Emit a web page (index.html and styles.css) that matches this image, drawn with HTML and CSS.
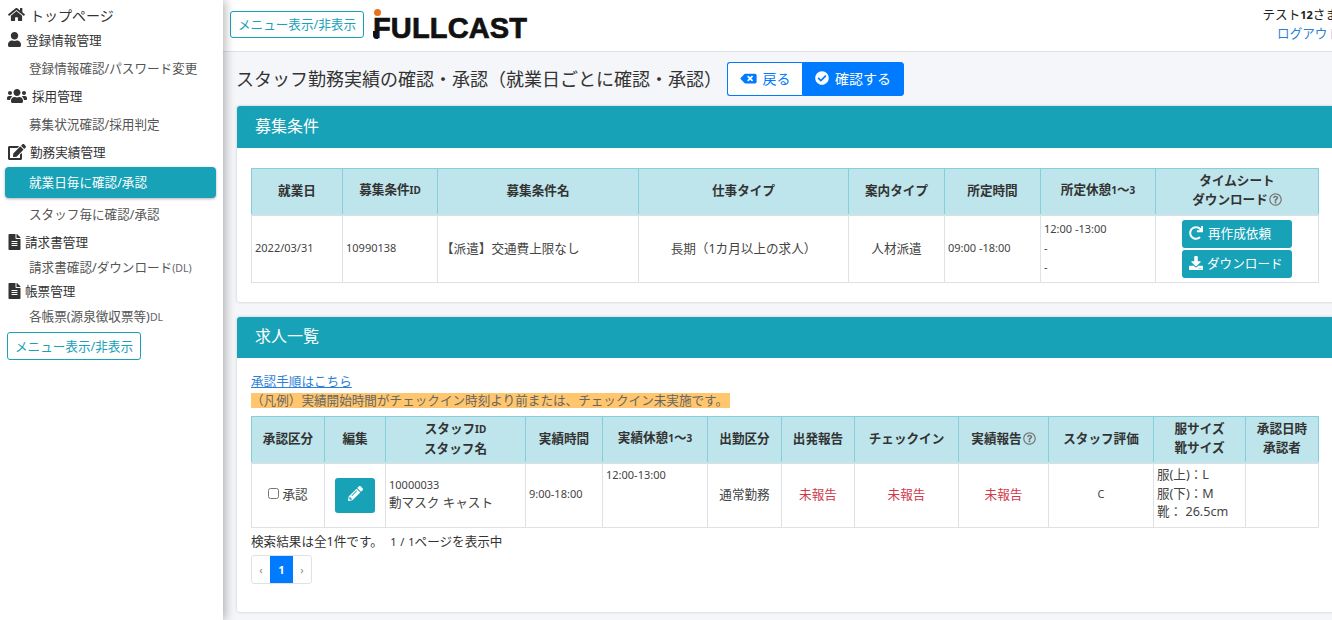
FILE: index.html
```html
<!DOCTYPE html>
<html lang="ja">
<head>
    <meta charset="UTF-8">
    <meta name="viewport" content="width=device-width, initial-scale=1.0">
    <title>スタッフ勤務実績の確認・承認</title>
    <link rel="stylesheet" href="styles.css">
</head>
<body>
    <svg class="icon-defs" xmlns="http://www.w3.org/2000/svg">
        <symbol id="i-home" viewBox="0 0 576 512"><path d="M280.37 148.26L96 300.11V464a16 16 0 0 0 16 16l112.06-.29a16 16 0 0 0 15.92-16V368a16 16 0 0 1 16-16h64a16 16 0 0 1 16 16v95.64a16 16 0 0 0 16 16.05L464 480a16 16 0 0 0 16-16V300L295.67 148.26a12.19 12.19 0 0 0-15.3 0zM571.6 251.47L488 182.56V44.05a12 12 0 0 0-12-12h-56a12 12 0 0 0-12 12v72.61L318.47 43a48 48 0 0 0-61 0L4.34 251.47a12 12 0 0 0-1.6 16.9l25.5 31A12 12 0 0 0 45.15 301l235.22-193.74a12.19 12.19 0 0 1 15.3 0L530.9 301a12 12 0 0 0 16.9-1.6l25.5-31a12 12 0 0 0-1.7-16.93z"/></symbol>
        <symbol id="i-user" viewBox="0 0 448 512"><path d="M224 256c70.7 0 128-57.3 128-128S294.7 0 224 0 96 57.3 96 128s57.3 128 128 128zm89.6 32h-16.7c-22.2 10.2-46.9 16-72.9 16s-50.6-5.8-72.9-16h-16.7C60.2 288 0 348.2 0 422.4V464c0 26.5 21.5 48 48 48h352c26.5 0 48-21.5 48-48v-41.6c0-74.2-60.2-134.4-134.4-134.4z"/></symbol>
        <symbol id="i-users" viewBox="0 0 640 512"><path d="M96 224c35.3 0 64-28.7 64-64s-28.7-64-64-64-64 28.7-64 64 28.7 64 64 64zm448 0c35.3 0 64-28.7 64-64s-28.7-64-64-64-64 28.7-64 64 28.7 64 64 64zm32 32h-64c-17.6 0-33.5 7.1-45.1 18.6 40.3 22.1 68.9 62 75.1 109.4h66c17.7 0 32-14.3 32-32v-32c0-35.3-28.7-64-64-64zm-256 0c61.9 0 112-50.1 112-112S381.9 32 320 32 208 82.1 208 144s50.1 112 112 112zm76.8 32h-8.3c-20.8 10-43.9 16-68.5 16s-47.6-6-68.5-16h-8.3C179.6 288 128 339.6 128 403.2V432c0 26.5 21.5 48 48 48h288c26.5 0 48-21.5 48-48v-28.8c0-63.6-51.6-115.2-115.2-115.2zm-223.7-13.4C161.5 263.1 145.6 256 128 256H64c-35.3 0-64 28.7-64 64v32c0 17.7 14.3 32 32 32h65.9c6.3-47.4 34.9-87.3 75.2-109.4z"/></symbol>
        <symbol id="i-edit" viewBox="0 0 576 512"><path d="M402.6 83.2l90.2 90.2c3.8 3.8 3.8 10 0 13.8L274.4 405.6l-92.8 10.3c-12.4 1.4-22.9-9.1-21.5-21.5l10.3-92.8L388.8 83.2c3.8-3.8 10-3.8 13.8 0zm162-22.9l-48.8-48.8c-15.2-15.2-39.9-15.2-55.2 0l-35.4 35.4c-3.8 3.8-3.8 10 0 13.8l90.2 90.2c3.8 3.8 10 3.8 13.8 0l35.4-35.4c15.2-15.3 15.2-40 0-55.2zM384 346.2V448H64V128h229.8c3.2 0 6.2-1.3 8.5-3.5l40-40c7.6-7.6 2.2-20.5-8.5-20.5H48C21.5 64 0 85.5 0 112v352c0 26.5 21.5 48 48 48h352c26.5 0 48-21.5 48-48V306.2c0-10.7-12.9-16-20.5-8.5l-40 40c-2.2 2.3-3.5 5.3-3.5 8.5z"/></symbol>
        <symbol id="i-file" viewBox="0 0 384 512"><path d="M224 136V0H24C10.7 0 0 10.7 0 24v464c0 13.3 10.7 24 24 24h336c13.3 0 24-10.7 24-24V160H248c-13.2 0-24-10.8-24-24zm64 236c0 6.6-5.4 12-12 12H108c-6.6 0-12-5.4-12-12v-8c0-6.6 5.4-12 12-12h168c6.6 0 12 5.4 12 12v8zm0-64c0 6.6-5.4 12-12 12H108c-6.6 0-12-5.4-12-12v-8c0-6.6 5.4-12 12-12h168c6.6 0 12 5.4 12 12v8zm0-72v8c0 6.6-5.4 12-12 12H108c-6.6 0-12-5.4-12-12v-8c0-6.6 5.4-12 12-12h168c6.6 0 12 5.4 12 12zm96-114.1v6.1H256V0h6.1c6.4 0 12.5 2.5 17 7l97.9 98c4.5 4.5 7 10.6 7 16.9z"/></symbol>
        <symbol id="i-back" viewBox="0 0 640 512"><path d="M576 64H205.26A63.97 63.97 0 0 0 160 82.75L9.37 233.37c-12.5 12.5-12.5 32.76 0 45.25L160 429.25c12 12 28.28 18.75 45.25 18.75H576c35.35 0 64-28.65 64-64V128c0-35.35-28.65-64-64-64zm-84.69 254.06c6.25 6.25 6.25 16.38 0 22.63l-22.62 22.62c-6.25 6.25-16.38 6.25-22.63 0L384 301.25l-62.06 62.06c-6.25 6.25-16.38 6.25-22.63 0l-22.62-22.62c-6.25-6.25-6.25-16.38 0-22.63L338.75 256l-62.06-62.06c-6.25-6.25-6.25-16.38 0-22.63l22.62-22.62c6.25-6.25 16.38-6.25 22.63 0L384 210.75l62.06-62.06c6.25-6.25 16.38-6.25 22.63 0l22.62 22.62c6.25 6.25 6.25 16.38 0 22.63L429.25 256l62.06 62.06z"/></symbol>
        <symbol id="i-check" viewBox="0 0 512 512"><path d="M504 256c0 136.967-111.033 248-248 248S8 392.967 8 256 119.033 8 256 8s248 111.033 248 248zM227.314 387.314l184-184c6.248-6.248 6.248-16.379 0-22.627l-22.627-22.627c-6.248-6.249-16.379-6.249-22.628 0L216 308.118l-70.059-70.059c-6.248-6.248-16.379-6.248-22.628 0l-22.627 22.627c-6.248 6.248-6.248 16.379 0 22.627l104 104c6.249 6.249 16.379 6.249 22.628.001z"/></symbol>
        <symbol id="i-redo" viewBox="0 0 512 512"><path d="M500.33 0h-47.41a12 12 0 0 0-12 12.57l4 82.76A247.42 247.42 0 0 0 256 8C119.34 8 7.9 119.53 8 256.19 8.1 393.07 119.1 504 256 504a247.1 247.1 0 0 0 166.18-63.91 12 12 0 0 0 .48-17.43l-34-34a12 12 0 0 0-16.38-.55A176 176 0 1 1 402.1 157.8l-101.53-4.87a12 12 0 0 0-12.57 12v47.41a12 12 0 0 0 12 12h200.33a12 12 0 0 0 12-12V12a12 12 0 0 0-12-12z"/></symbol>
        <symbol id="i-download" viewBox="0 0 512 512"><path d="M216 0h80c13.3 0 24 10.7 24 24v168h87.7c17.8 0 26.7 21.5 14.1 34.1L269.7 378.3c-7.5 7.5-19.8 7.5-27.3 0L90.1 226.1c-12.6-12.6-3.7-34.1 14.1-34.1H192V24c0-13.3 10.7-24 24-24zm296 376v112c0 13.3-10.7 24-24 24H24c-13.3 0-24-10.7-24-24V376c0-13.3 10.7-24 24-24h146.7l49 49c20.1 20.1 52.5 20.1 72.6 0l49-49H488c13.3 0 24 10.7 24 24zm-124 88c0-11-9-20-20-20s-20 9-20 20 9 20 20 20 20-9 20-20zm64 0c0-11-9-20-20-20s-20 9-20 20 9 20 20 20 20-9 20-20z"/></symbol>
        <symbol id="i-pencil" viewBox="0 0 512 512"><path d="M497.9 142.1l-46.1 46.1c-4.7 4.7-12.3 4.7-17 0l-111-111c-4.7-4.7-4.7-12.3 0-17l46.1-46.1c18.7-18.7 49.1-18.7 67.9 0l60.1 60.1c18.8 18.7 18.8 49.1 0 67.9zM284.2 99.8L21.6 362.4.4 483.9c-2.9 16.4 11.4 30.6 27.8 27.8l121.5-21.3 262.6-262.6c4.7-4.7 4.7-12.3 0-17l-111-111c-4.8-4.7-12.4-4.7-17.1 0zM124.1 339.9c-5.5-5.5-5.5-14.3 0-19.8l154-154c5.5-5.5 14.3-5.5 19.8 0s5.5 14.3 0 19.8l-154 154c-5.5 5.5-14.3 5.5-19.8 0zM88 424h48v36.3l-64.5 11.3-31.1-31.1L51.7 376H88v48z"/></symbol>
        <symbol id="i-help" viewBox="0 0 512 512"><path d="M256 8C119.043 8 8 119.083 8 256c0 136.997 111.043 248 248 248s248-111.003 248-248C504 119.083 392.957 8 256 8zm0 448c-110.532 0-200-89.431-200-200 0-110.495 89.472-200 200-200 110.491 0 200 89.471 200 200 0 110.53-89.431 200-200 200zm107.244-255.2c0 67.052-72.421 68.084-72.421 92.863V300c0 6.627-5.373 12-12 12h-45.647c-6.627 0-12-5.373-12-12v-8.659c0-35.745 27.1-50.034 47.579-61.516 17.561-9.845 28.324-16.541 28.324-29.579 0-17.246-21.999-28.693-39.784-28.693-23.189 0-33.894 10.977-48.942 29.969-4.057 5.12-11.46 6.071-16.666 2.124l-27.824-21.098c-5.107-3.872-6.251-11.066-2.644-16.363C184.846 131.491 214.94 112 261.794 112c49.071 0 101.45 38.304 101.45 88.8zM298 368c0 23.159-18.841 42-42 42s-42-18.841-42-42 18.841-42 42-42 42 18.841 42 42z"/></symbol>
    </svg>

    <aside class="sidebar">
        <a class="menu-head menu-top"><svg class="icon icon-home"><use href="#i-home"/></svg>トップページ</a>
        <div class="menu-head"><svg class="icon icon-user"><use href="#i-user"/></svg>登録情報管理</div>
        <a class="menu-link">登録情報確認/パスワード変更</a>
        <div class="menu-head"><svg class="icon icon-users"><use href="#i-users"/></svg>採用管理</div>
        <a class="menu-link">募集状況確認/採用判定</a>
        <div class="menu-head"><svg class="icon icon-edit"><use href="#i-edit"/></svg>勤務実績管理</div>
        <a class="menu-link menu-active">就業日毎に確認/承認</a>
        <a class="menu-link">スタッフ毎に確認/承認</a>
        <div class="menu-head"><svg class="icon icon-file"><use href="#i-file"/></svg>請求書管理</div>
        <a class="menu-link menu-short"><span>請求書確認/ダウンロード<small>(DL)</small></span></a>
        <div class="menu-head"><svg class="icon icon-file"><use href="#i-file"/></svg>帳票管理</div>
        <a class="menu-link menu-short"><span>各帳票(源泉徴収票等)<small>DL</small></span></a>
        <button class="toggle-btn toggle-side">メニュー表示/非表示</button>
    </aside>

    <div class="main">
        <header class="topbar">
            <button class="toggle-btn">メニュー表示/非表示</button>
            <div class="logo">
                <span class="logo-dot"></span>
                <span class="logo-tail"></span>
                <span class="logo-text">FULLCAST</span>
            </div>
            <div class="user-box">
                <div class="user-name">テスト<b>12</b>さま</div>
                <a class="logout">ログアウト</a>
            </div>
        </header>

        <div class="content">
            <div class="page-title">
                <h1>スタッフ勤務実績の確認・承認（就業日ごとに確認・承認）</h1>
                <div class="btn-group">
                    <button class="btn-back"><svg class="icon icon-back"><use href="#i-back"/></svg>戻る</button>
                    <button class="btn-confirm"><svg class="icon icon-check"><use href="#i-check"/></svg>確認する</button>
                </div>
            </div>

            <section class="card card-cond">
                <div class="card-header">募集条件</div>
                <div class="card-body">
                    <table class="data-table cond-table">
                        <thead>
                            <tr>
                                <th>就業日</th>
                                <th>募集条件<small>ID</small></th>
                                <th>募集条件名</th>
                                <th>仕事タイプ</th>
                                <th>案内タイプ</th>
                                <th>所定時間</th>
                                <th>所定休憩<small>1</small>～<small>3</small></th>
                                <th>タイムシート<br>ダウンロード<svg class="icon icon-help"><use href="#i-help"/></svg></th>
                            </tr>
                        </thead>
                        <tbody>
                            <tr>
                                <td class="small">2022/03/31</td>
                                <td class="small">10990138</td>
                                <td>【派遣】交通費上限なし</td>
                                <td class="center">長期（1カ月以上の求人）</td>
                                <td class="center">人材派遣</td>
                                <td class="small">09:00 -18:00</td>
                                <td class="small rest-cell">12:00 -13:00<br>-<br>-</td>
                                <td class="center btn-cell">
                                    <button class="btn-teal"><svg class="icon icon-redo"><use href="#i-redo"/></svg>再作成依頼</button>
                                    <button class="btn-teal"><svg class="icon icon-download"><use href="#i-download"/></svg>ダウンロード</button>
                                </td>
                            </tr>
                        </tbody>
                    </table>
                </div>
            </section>

            <section class="card card-list">
                <div class="card-header">求人一覧</div>
                <div class="card-body">
                    <a class="guide-link">承認手順はこちら</a>
                    <div class="legend"><span>（凡例）実績開始時間がチェックイン時刻より前または、チェックイン未実施です。</span></div>
                    <table class="data-table list-table">
                        <thead>
                            <tr>
                                <th>承認区分</th>
                                <th>編集</th>
                                <th>スタッフ<small>ID</small><br>スタッフ名</th>
                                <th>実績時間</th>
                                <th>実績休憩<small>1</small>～<small>3</small></th>
                                <th>出勤区分</th>
                                <th>出発報告</th>
                                <th>チェックイン</th>
                                <th>実績報告<svg class="icon icon-help"><use href="#i-help"/></svg></th>
                                <th>スタッフ評価</th>
                                <th>服サイズ<br>靴サイズ</th>
                                <th>承認日時<br>承認者</th>
                            </tr>
                        </thead>
                        <tbody>
                            <tr>
                                <td class="center"><label class="approve"><input type="checkbox">承認</label></td>
                                <td class="center btn-cell"><button class="btn-edit"><svg class="icon icon-pencil"><use href="#i-pencil"/></svg></button></td>
                                <td><div class="small">10000033</div><div class="staff-name">動マスク キャスト</div></td>
                                <td class="small">9:00-18:00</td>
                                <td class="small top">12:00-13:00</td>
                                <td class="center">通常勤務</td>
                                <td class="center danger">未報告</td>
                                <td class="center danger">未報告</td>
                                <td class="center danger">未報告</td>
                                <td class="center small">C</td>
                                <td class="size-cell">服(上)：L<br>服(下)：M<br>靴： 26.5cm</td>
                                <td></td>
                            </tr>
                        </tbody>
                    </table>
                    <div class="result-text">検索結果は全1件です。 <span class="page-count">1 / 1</span>ページを表示中</div>
                    <ul class="pagination">
                        <li>‹</li>
                        <li class="current">1</li>
                        <li>›</li>
                    </ul>
                </div>
            </section>
        </div>
    </div>
</body>
</html>
```

FILE: styles.css
```css
:root {
    --teal: #17a2b8;
    --blue: #007bff;
    --text-color: #444;
    --head-bg: #bee5eb;
    --head-border: #86cfda;
    --cell-border: #dee2e6;
}

* {
    box-sizing: border-box;
}

html, body {
    height: 100%;
}

body {
    margin: 0;
    display: flex;
    overflow: hidden;
    background: #f4f6f9;
    color: var(--text-color);
    font-family: "Noto Sans", "Noto Sans CJK JP", sans-serif;
    font-size: 12.6px;
}

button {
    font-family: inherit;
    cursor: pointer;
}

.icon-defs {
    display: none;
}

.icon {
    fill: currentColor;
    flex-shrink: 0;
}

/* sidebar */
.sidebar {
    width: 223px;
    flex-shrink: 0;
    padding-top: 4px;
    background: white;
    box-shadow: 2px 0 10px rgba(0, 0, 0, 0.3);
    position: relative;
    z-index: 2;
}

.menu-head {
    display: flex;
    align-items: center;
    height: 24px;
    padding-left: 8px;
    padding-bottom: 1px;
    color: #333;
}

.menu-top {
    font-size: 14px;
    padding-bottom: 3px;
}

.menu-link {
    display: flex;
    align-items: center;
    height: 32px;
    padding-left: 29px;
    padding-bottom: 1px;
    color: #555;
}

.menu-link small {
    font-size: 10.5px;
    color: #666;
}

.menu-short {
    height: 25px;
}

.menu-active {
    height: 31px;
    width: 211px;
    margin: 3px 0 0 5px;
    padding-left: 24px;
    padding-bottom: 2px;
    border-radius: 4px;
    background: var(--teal);
    color: white;
    box-shadow: 0 1px 3px rgba(0, 0, 0, 0.3);
}

.icon-home { width: 17px; height: 15px; margin-right: 5px; }
.icon-user { width: 13px; height: 15px; margin-right: 5px; }
.icon-users { width: 20px; height: 16px; margin-right: 5px; margin-left: -1px; }
.icon-edit { width: 18px; height: 16px; margin-right: 4px; }
.icon-file { width: 13px; height: 16px; margin-right: 4px; }

.toggle-btn {
    height: 28px;
    padding: 0 0 1px;
    border: 1px solid var(--teal);
    border-radius: 3px;
    background: white;
    color: var(--teal);
    font-size: 12.6px;
    white-space: nowrap;
}

.toggle-side {
    margin: 4px 0 0 7px;
    width: 134px;
}

/* main */
.main {
    flex: 1;
    min-width: 0;
}

.topbar {
    display: flex;
    align-items: center;
    height: 52px;
    padding-left: 7px;
    padding-bottom: 3px;
    background: white;
    border-bottom: 1px solid #dee2e6;
}

.topbar .toggle-btn {
    width: 134px;
    height: 27px;
}

.logo {
    position: relative;
    margin-left: 9px;
    padding-top: 8px;
}

.logo-text {
    color: #111;
    font-family: "Liberation Sans", sans-serif;
    font-size: 29px;
    font-weight: 700;
    line-height: 28px;
    letter-spacing: 0.15px;
    -webkit-text-stroke: 0.7px #111;
}

.logo-dot {
    position: absolute;
    left: 1px;
    top: 3px;
    width: 7px;
    height: 7px;
    border-radius: 50%;
    background: #e8721c;
}

.logo-tail {
    position: absolute;
    left: 0;
    top: 25px;
    width: 5px;
    height: 8px;
    border-radius: 0 0 0 4px;
    background: #111;
}

.user-box {
    margin-left: auto;
    margin-right: -8px;
    text-align: right;
    white-space: nowrap;
    line-height: 19px;
    flex-shrink: 0;
}

.user-name {
    color: #222;
    margin-right: 2px;
}

.user-name b {
    font-size: 11px;
}

.logout {
    color: #2d7fd6;
}

.content {
    padding-left: 14px;
    margin-right: -30px;
}

.page-title {
    display: flex;
    align-items: center;
    height: 54px;
}

h1 {
    margin: 0 5px 3px -1px;
    color: #333;
    font-size: 18px;
    font-weight: 400;
    white-space: nowrap;
}

.btn-group {
    display: flex;
    height: 34px;
}

.btn-group button {
    display: flex;
    align-items: center;
    font-size: 14px;
    padding: 0 0 2px;
}

.btn-back {
    width: 75px;
    justify-content: center;
    border: 1px solid var(--blue);
    border-right: none;
    border-radius: 3px 0 0 3px;
    background: white;
    color: var(--blue);
}

.btn-confirm {
    width: 102px;
    justify-content: center;
    border: 1px solid var(--blue);
    border-radius: 0 3px 3px 0;
    background: var(--blue);
    color: white;
}

.icon-back { width: 17px; height: 13px; margin-right: 6px; }
.icon-check { width: 14px; height: 14px; margin-right: 6px; }

/* cards */
.card {
    background: white;
    border-radius: 3px;
    box-shadow: 0 0 3px rgba(0, 0, 0, 0.2);
}

.card-cond {
    height: 196px;
    margin-bottom: 15px;
}

.card-list {
    height: 295px;
}

.card-header {
    display: flex;
    align-items: center;
    height: 42px;
    padding-left: 18px;
    padding-bottom: 5px;
    background: var(--teal);
    color: white;
    font-size: 16px;
    border-radius: 3px 3px 0 0;
}

.card-list .card-header {
    height: 41px;
    padding-bottom: 6px;
}

.card-body {
    padding: 20px 14px 0;
}

.card-list .card-body {
    padding-top: 15px;
}

/* tables */
.data-table {
    border-collapse: collapse;
    table-layout: fixed;
    color: #444;
}

.data-table th {
    height: 46px;
    padding: 0 2px 2px;
    background: var(--head-bg);
    border: 1px solid var(--head-border);
    border-bottom: 2px solid #cfe3e8;
    color: #333;
    font-size: 12.6px;
    font-weight: 700;
    line-height: 19px;
    text-align: center;
}

.data-table th small {
    font-size: 10px;
}

.data-table td {
    padding: 3px 3px 5px;
    border: 1px solid var(--cell-border);
    vertical-align: middle;
}

.data-table td.btn-cell {
    padding: 3px;
}

.cond-table { width: 1067px; }
.cond-table tbody tr { height: 68px; }
.cond-table th:nth-child(1) { width: 91px; }
.cond-table th:nth-child(2) { width: 95px; }
.cond-table th:nth-child(3) { width: 201px; }
.cond-table th:nth-child(4) { width: 210px; }
.cond-table th:nth-child(5) { width: 96px; }
.cond-table th:nth-child(6) { width: 96px; }
.cond-table th:nth-child(7) { width: 115px; }
.cond-table th:nth-child(8) { width: 163px; }

.list-table { width: 1067px; }
.list-table tbody tr { height: 65px; }
.list-table th:nth-child(1) { width: 73px; }
.list-table th:nth-child(2) { width: 61px; }
.list-table th:nth-child(3) { width: 140px; }
.list-table th:nth-child(4) { width: 77px; }
.list-table th:nth-child(5) { width: 105px; }
.list-table th:nth-child(6) { width: 74px; }
.list-table th:nth-child(7) { width: 73px; }
.list-table th:nth-child(8) { width: 104px; }
.list-table th:nth-child(9) { width: 90px; }
.list-table th:nth-child(10) { width: 105px; }
.list-table th:nth-child(11) { width: 92px; }
.list-table th:nth-child(12) { width: 73px; }
.list-table td { padding-bottom: 6px; }

.center { text-align: center; }
.data-table .small { font-size: 11px; }
.data-table .top { vertical-align: top; }
.data-table .danger { color: #d0394b; }

.rest-cell { line-height: 19px; }

.icon-help {
    width: 13px;
    height: 13px;
    margin-left: 1px;
    color: #777;
    vertical-align: -2px;
}

.btn-teal {
    display: flex;
    align-items: center;
    width: 110px;
    height: 28px;
    margin: 0 auto 2px;
    padding: 0 0 2px 7px;
    border: none;
    border-radius: 3px;
    background: var(--teal);
    color: white;
    font-size: 12.6px;
    white-space: nowrap;
}

.btn-teal:last-child { margin-bottom: 0; }
.icon-redo { width: 14px; height: 14px; margin-right: 5px; }
.icon-download { width: 14px; height: 14px; margin-right: 4px; }

.btn-edit {
    width: 40px;
    height: 35px;
    border: none;
    border-radius: 3px;
    background: var(--teal);
    color: white;
    padding: 0;
}

.icon-pencil { width: 15px; height: 15px; }

.approve {
    display: inline-flex;
    align-items: center;
}

.approve input {
    width: 11px;
    height: 11px;
    margin: 0 3px 0 0;
}

.staff-name {
    margin-top: 0;
}

.size-cell {
    line-height: 18.5px;
}

.data-table .size-cell { padding: 0 3px 3px; }

.guide-link {
    display: block;
    color: #2d7fd6;
    text-decoration: underline;
    line-height: 18px;
}

.legend {
    height: 23px;
    line-height: 15px;
    margin-top: 2px;
}

.legend span {
    display: inline-block;
    padding-right: 2px;
    background: #ffc66d;
    color: #666;
}

.result-text {
    margin-top: 6px;
    line-height: 16px;
    color: #333;
}

.page-count {
    font-size: 11px;
    margin-left: 4px;
    word-spacing: 1px;
}

.pagination {
    display: flex;
    width: 61px;
    height: 29px;
    margin: 5px 0 0;
    padding: 0;
    list-style: none;
    border: 1px solid var(--cell-border);
    border-radius: 3px;
    color: #888;
    font-size: 11px;
}

.pagination li {
    flex: 1;
    display: flex;
    align-items: center;
    justify-content: center;
}

.pagination .current {
    flex: 0 0 23px;
    background: var(--blue);
    color: white;
    font-weight: 700;
}
```
